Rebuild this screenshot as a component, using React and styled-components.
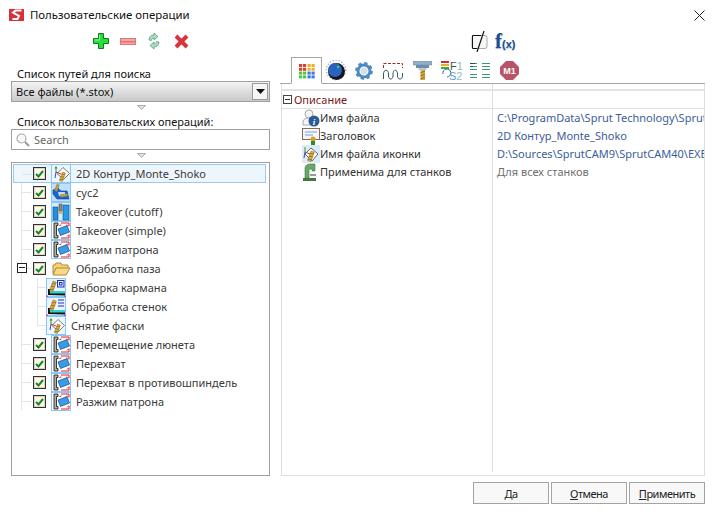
import React from "react";
import styled, { createGlobalStyle } from "styled-components";

const Global = createGlobalStyle`
  html, body { margin: 0; padding: 0; background: #fff; }
  body { font-family: "Noto Sans", "DejaVu Sans", sans-serif; font-size: 11px; color: #222; }
`;

const Dialog = styled.div`
  width: 716px; height: 516px; display: flex; flex-direction: column; background: #fff; overflow: hidden;
`;
const TitleBar = styled.div`
  height: 32px; display: flex; align-items: center; padding: 0 11px 2px 9px; box-sizing: border-box;
`;
const Title = styled.div`
  margin-left: 6px; flex: 1; font-size: 11.4px; color: #111; line-height: 14px;
`;
const Body = styled.div`
  height: 444px; display: flex; padding-left: 11px; gap: 11px;
`;
const LeftColumn = styled.div`
  width: 259px; display: flex; flex-direction: column;
`;
const ActionBar = styled.div`
  height: 36px; padding: 0 0 18px 82px; box-sizing: border-box; display: flex; align-items: center; gap: 11px;
`;
const FieldLabel = styled.div`
  height: 13px; line-height: 12px; padding-left: 6px; color: #111; font-size: 11px;
`;
const Combo = styled.div`
  height: 21px; box-sizing: border-box; border: 1px solid #a0a0a0; display: flex; align-items: center;
  padding: 0 1px 0 4px; background: linear-gradient(#f4f4f4, #c9c9c9); color: #111;
`;
const ComboText = styled.div`flex: 1;`;
const ComboButton = styled.div`
  width: 14px; height: 15px; border: 1px solid #9a9a9a; background: #f6f6f6; display: flex; align-items: center; justify-content: center;
`;
const Splitter = styled.div`
  height: 14px; display: flex; justify-content: center; padding-top: 3px; box-sizing: border-box; padding-left: 1px;
`;
const SearchBox = styled.div`
  height: 21px; box-sizing: border-box; border: 1px solid #a0a0a0; display: flex; align-items: center; padding-left: 4px; gap: 4px; color: #666;
`;
const SmallSplitter = styled(Splitter)`height: 12px;`;
const Tree = styled.div`
  position: relative; height: 314px; box-sizing: border-box; border: 1px solid #a0a0a0; padding: 1px 3px 0 1px;
  &::before { content: ""; position: absolute; left: 9px; top: 9px; height: 238px; border-left: 1px solid #e4e4e4; }
`;
const Row = styled.div`
  position: relative; height: 19px; display: flex; align-items: center; box-sizing: border-box;
  padding-left: ${p => p.$child ? 33 : 20}px; color: #3a3a3a;
  ${p => p.$selected && "background: #eef6fd; border: 1px solid #9ccbf2; padding-left: 19px;"}
  &::before {
    content: ""; position: absolute; left: ${p => p.$child ? 24 : 8}px; top: 9px; width: ${p => p.$child ? 9 : 10}px;
    border-top: 1px solid #e4e4e4; z-index: 0;
  }
`;
const ChildGroup = styled.div`
  position: relative;
  &::before { content: ""; position: absolute; left: 24px; top: 0; height: 48px; border-left: 1px solid #e4e4e4; }
`;
const Expander = styled.div`
  position: absolute; left: 4px; top: 4px; width: 8px; height: 8px; border: 1px solid #222; background: #fff; z-index: 1;
  &::after { content: ""; position: absolute; left: 1px; right: 1px; top: 3px; border-top: 1px solid #222; }
`;
const CheckBox = styled.div`
  width: 11px; height: 11px; border: 1px solid #20344c; background: #fdf8f0; display: flex; align-items: center; justify-content: center; position: relative; z-index: 1;
  box-shadow: inset 0 0 0 1px #f4cfa0;
`;
const IconSlot = styled.div`
  width: 20px; height: 19px; margin-left: ${p => p.$child ? 0 : 5}px; flex: none; display: flex; position: relative; z-index: 1;
`;
const RowLabel = styled.span`
  margin-left: 5px; white-space: nowrap;
`;
const RightColumn = styled.div`
  width: 424px; display: flex; flex-direction: column;
`;
const TopTools = styled.div`
  height: 25px; display: flex; align-items: flex-start; padding-left: 190px; gap: 7px; box-sizing: border-box;
`;
const Formula = styled.div`
  font-family: "Liberation Serif", serif; font-weight: bold; color: #1f4f93; line-height: 20px; margin-top: -1px; font-size: 21px;
  text-shadow: 0 1px 1px #9fb6d4;
  & span { font-size: 11px; font-family: "Liberation Sans", sans-serif; }
`;
const TabBar = styled.div`
  height: 27px; border-bottom: 1px solid #a6a6a6; display: flex; align-items: flex-end; box-sizing: border-box; padding-left: 11px; margin-left: -1px;
`;
const ActiveTab = styled.div`
  width: 31px; height: 27px; box-sizing: border-box; border: 1px solid #a6a6a6; border-bottom: 1px solid #fff; margin-bottom: -1px;
  display: flex; align-items: center; justify-content: center; background: #fff; padding-top: 1px;
`;
const TabIcon = styled.div`
  height: 25px; display: flex; align-items: center; justify-content: center; width: ${p => p.$w}px; flex: none;
`;
const Grid = styled.div`
  flex: 1; display: flex; border: 1px solid #dedede; border-top: none; min-height: 0;
`;
const NameColumn = styled.div`
  width: 210px; flex: none; display: flex; flex-direction: column;
`;
const ValueColumn = styled.div`
  flex: 1; min-width: 0; display: flex; flex-direction: column; overflow: hidden; margin-bottom: 3px; border-left: 1px solid #dedede;
`;
const Blank = styled.div`height: 7px; box-sizing: border-box; border-bottom: 2px solid #e3e3e3; flex: none;`;
const HeaderCell = styled.div`
  height: 18px; box-sizing: border-box; border-bottom: 1px solid #dedede; display: flex; align-items: center; color: #7a1818; padding-left: 1px; flex: none;
`;
const Minus = styled.div`
  width: 7px; height: 7px; border: 1px solid #444; position: relative; margin-right: 2px;
  &::after { content: ""; position: absolute; left: 1px; right: 1px; top: 3px; border-top: 1px solid #333; }
`;
const PropertyName = styled.div`
  height: 18px; box-sizing: border-box; display: flex; align-items: center; padding: 0 0 1px 20px; color: #333; flex: none; white-space: nowrap;
`;
const PropertyValue = styled.div`
  height: 18px; line-height: 18px; padding-left: 4px; white-space: nowrap; flex: none;
  color: ${p => p.$muted ? "#6f6f6f" : "#3d5d98"};
`;
const Footer = styled.div`
  height: 40px; display: flex; justify-content: flex-end; padding: 6px 11px 0 0; gap: 2px; box-sizing: border-box;
`;
const Button = styled.div`
  width: 76px; height: 22px; box-sizing: border-box; border: 1px solid #a3a3a3; background: #f8f8f8; display: flex; align-items: center; justify-content: center; color: #222; letter-spacing: -0.5px;
  & u { text-underline-offset: 1px; }
`;

const Logo = () => (
  <svg width="15" height="12" viewBox="0 0 15 12"><path d="M0 0h15v12H0z" fill="#d8303a"/><path d="M12.500 1.500H6.500L4 3.500l6 3.500-1.500 3H3.500" fill="none" stroke="#fff" strokeWidth="2"/></svg>
);
const CloseX = () => (
  <svg width="11" height="11" viewBox="0 0 11 11"><path d="M.5.5l10 10M10.500.5l-10 10" stroke="#222" strokeWidth="1"/></svg>
);
const Plus = () => (
  <svg width="16" height="16" viewBox="0 0 16 16"><path d="M5.500.5h5v5h5v5h-5v5h-5v-5h-5v-5h5z" fill="#25e03a" stroke="#0f7a1c"/><path d="M6.500 2v5h-5" fill="none" stroke="#9ff5a8"/></svg>
);
const MinusTool = () => (
  <svg width="16" height="7" viewBox="0 0 16 7"><rect x=".5" y=".5" width="15" height="6" fill="#f7a6a6" stroke="#d77a7a"/><rect x="1" y="3" width="14" height="1.500" fill="#e57373"/></svg>
);
const Refresh = () => (
  <svg width="14" height="18" viewBox="0 0 14 18"><path d="M2 8c0-3 2-5 5-5V1l4 3.500L7 8V6C5.500 6 4.500 7 4.500 8.500z" fill="#a9dcc0" stroke="#5f9f80" strokeWidth=".8"/><path d="M12 10c0 3-2 5-5 5v2l-4-3.500L7 10v2c1.500 0 2.500-1 2.500-2.500z" fill="#a9dcc0" stroke="#5f9f80" strokeWidth=".8"/></svg>
);
const CrossIcon = styled.svg`margin-left: 2px;`;
const Cross = () => (
  <CrossIcon width="15" height="15" viewBox="0 0 15 15"><path d="M2 2l11 11M13 2L2 13" stroke="#d8343c" strokeWidth="4"/></CrossIcon>
);
const Caret = () => (
  <svg width="9" height="5" viewBox="0 0 9 5"><path d="M0 0h9L4.500 5z" fill="#111"/></svg>
);
const SplitArrow = () => (
  <svg width="9" height="5" viewBox="0 0 9 5"><path d="M.5.500h8L4.500 4.500z" fill="#e2e2e2" stroke="#9a9a9a" strokeWidth=".8"/></svg>
);
const Magnifier = () => (
  <svg width="14" height="14" viewBox="0 0 14 14"><circle cx="5.500" cy="5.500" r="4.500" fill="#f7f7f7" stroke="#aaa" strokeWidth="1.200"/><path d="M9 9l4 4" stroke="#999" strokeWidth="2"/></svg>
);
const Check = () => (
  <svg width="9" height="8" viewBox="0 0 9 8"><path d="M1 4l2.500 2.500L8 1" fill="none" stroke="#0d8a25" strokeWidth="2"/></svg>
);

const Frame = ({ fill = "#e8f3fc", children }) => (
  <svg width="20" height="19" viewBox="0 0 20 19">
    <rect x=".5" y=".5" width="19" height="18" fill={fill} stroke="#8cc6f4"/>
    {children}
  </svg>
);
const Drill = ({ x = 11, y = 6, s = 1 }) => (
  <g transform={`translate(${x} ${y}) rotate(20) scale(${s})`}>
    <rect x="0" y="0" width="3.500" height="10" fill="#dcb040" stroke="#8a6a20" strokeWidth=".5"/>
    <path d="M0 3l3.500-1.500M0 6l3.500-1.500M0 9l3.500-1.500" stroke="#7a5a18" strokeWidth=".6"/>
  </g>
);
const Contour = () => (
  <Frame fill="#eef6fd">
    <path d="M6 9.500l6-6 6.500 6-6 6z" fill="#fff" stroke="#777"/>
    <path d="M5 8V3" stroke="#2aa02a"/><path d="M3.500 4.500L5 2l1.500 2.500z" fill="#2aa02a"/>
    <path d="M5 8l5 2" stroke="#d82a2a"/><path d="M5 8l-1 6" stroke="#2a4ad8"/>
    <Drill x={11.500} y={8} s={.9}/>
  </Frame>
);
const Cyc = () => (
  <Frame fill="#bfe0fa">
    <path d="M2 7l5-2 3 3h6l2 8H6L2 11z" fill="#1566d6" stroke="#0c3a88" strokeWidth=".6"/>
    <path d="M7 9h7v4H8z" fill="#bfe0fa"/>
    <Drill x={6} y={1} s={.7}/><g transform="rotate(60 14 13)"><Drill x={13} y={10} s={.7}/></g>
  </Frame>
);
const Cutoff = () => (
  <Frame fill="#d8ebfb">
    <rect x="2" y="5" width="5" height="13" fill="#1f8fe0" stroke="#0d4e90" strokeWidth=".6"/>
    <rect x="12" y="3" width="6" height="15" fill="#2a9ae8" stroke="#0d4e90" strokeWidth=".6"/>
    <rect x="8" y="2" width="3" height="7" fill="#8a8a8a" stroke="#444" strokeWidth=".5"/>
    <rect x="8" y="9" width="3" height="3" fill="#e2b23a"/>
  </Frame>
);
const Take = () => (
  <Frame fill="#fff">
    <path d="M3 2h4v2.500H5.500v10H7V17H3z" fill="#b0b0b0" stroke="#111" strokeWidth=".8"/>
    <path d="M7 8l9-3.500 2.500 6.500-9 3.500z" fill="#3a9ae4" stroke="#0d4e90" strokeWidth=".7"/>
    <path d="M8.500 4.500l2-.5M10 2h8v3M16 3.500L18 5.500" fill="none" stroke="#e02020"/>
    <path d="M10 17h8v-3M16 15.500L18 13.500" fill="none" stroke="#e02020"/>
  </Frame>
);
const Folder = () => (
  <svg width="20" height="19" viewBox="0 0 20 19">
    <path d="M2 15V6h2l1-2h5l1 2h6v3" fill="#f4d27a" stroke="#b08a38"/>
    <path d="M2 16l3-7h14l-4 7z" fill="#f8d884" stroke="#b08a38"/>
  </svg>
);
const Pocket = ({ walls }) => (
  <Frame fill="#e8f3fc">
    <path d="M2 17v-6h2v4h15v2.500z" fill="#111"/>
    <rect x="4" y="13" width="15" height="2.500" fill="#27d6c8"/>
    <Drill x={7} y={3}/>
    {walls
      ? <path d="M12 3h6M12 6h6M12 9h6" stroke="#2030c0" strokeWidth="1.200"/>
      : <><rect x="11.500" y="2.500" width="6.500" height="6.500" fill="none" stroke="#2030c0"/><rect x="13.500" y="4.500" width="2.500" height="2.500" fill="none" stroke="#2030c0"/></>}
    <rect x="0" y="17.500" width="2" height="1.500" fill="#e040e0"/><rect x="18" y="17.500" width="2" height="1.500" fill="#e040e0"/>
  </Frame>
);

const GridIcon = () => {
  const colors = ["#d8412f", "#d8412f", "#eab22c", "#eab22c", "#d8412f", "#d8412f", "#eab22c", "#eab22c", "#4fc83c", "#4fc83c", "#3a7ae8", "#3a7ae8", "#4fc83c", "#4fc83c", "#3a7ae8", "#3a7ae8"];
  return (
    <svg width="16" height="15" viewBox="0 0 16 15">
      {colors.map((c, i) => <rect key={i} x={(i % 4) * 4 + (i % 4 > 1 ? 0.5 : 0)} y={Math.floor(i / 4) * 3.800} width="3.200" height="3" fill={c}/>)}
    </svg>
  );
};
const Knob = () => (
  <svg width="22" height="21" viewBox="0 0 22 21">
    <circle cx="11" cy="10" r="9.700" fill="none" stroke="#999" strokeWidth="1.400" strokeDasharray="1 2"/>
    <circle cx="11.500" cy="11.500" r="8.500" fill="#15151f"/>
    <circle cx="10" cy="10" r="7" fill="#2a62c0"/>
    <circle cx="13" cy="7" r="1.200" fill="#30e050"/>
  </svg>
);
const Gear = () => (
  <svg width="18" height="18" viewBox="0 0 18 18">
    <circle cx="9" cy="9" r="6" fill="none" stroke="#4d8ac0" strokeWidth="3"/>
    <circle cx="9" cy="9" r="7.700" fill="none" stroke="#4d8ac0" strokeWidth="2.400" strokeDasharray="3.200 2.850"/>
    <circle cx="9" cy="9" r="3.500" fill="#cfe2f2"/>
  </svg>
);
const Wave = () => (
  <svg width="20" height="18" viewBox="0 0 20 18">
    <path d="M.5 6V1.500h19V6" fill="none" stroke="#a02a2a" strokeDasharray="3 1.500"/>
    <path d="M.5 17v-5c0-5 5-5 5 0v2c0 4 4.500 4 4.500 0v-2c0-5 4.500-5 4.500 0v2c0 4 5 4 5 0v-3" fill="none" stroke="#2f5f50" strokeWidth="1"/>
  </svg>
);
const Tool = () => (
  <svg width="19" height="19" viewBox="0 0 19 19">
    <rect x="0" y="0" width="19" height="4" fill="#8fb0c8" stroke="#6a8aa0" strokeWidth=".5"/>
    <rect x="3" y="4" width="13" height="3" fill="#6d8ea8"/>
    <rect x="5.500" y="7" width="8" height="2" fill="#b8cad8"/>
    <rect x="7.500" y="9" width="4.500" height="10" fill="#d8a838"/>
    <path d="M7.500 12l4.500-2M7.500 15l4.500-2M7.500 18l4.500-2" stroke="#7a5a18" strokeWidth=".8"/>
  </svg>
);
const SpindleCode = () => (
  <svg width="22" height="19" viewBox="0 0 22 19">
    <rect x="0" y="0" width="8" height="2" fill="#c83030"/><rect x="0" y="3" width="8" height="2" fill="#e8b020"/><rect x="0" y="6" width="8" height="2" fill="#40b040"/>
    <text x="9" y="8.500" fontFamily="Liberation Sans" fontSize="11" fill="#2f5f50">F<tspan fill="#8fc0a8">1</tspan></text>
    <path d="M6 16a4 4 0 1 0-4-3" fill="none" stroke="#2a6a9a"/>
    <text x="8" y="18.500" fontFamily="Liberation Sans" fontSize="11" fill="#5a9ac0">S<tspan fill="#8fbcd8">2</tspan></text>
  </svg>
);
const Lines = () => (
  <svg width="20" height="18" viewBox="0 0 20 18">
    <path d="M0 1.500h7M0 4.500h7M0 7.500h7M0 12.500h7M0 15.500h7M12 1.500h8M12 4.500h8M12 7.500h8M12 12.500h8M12 15.500h8" stroke="#3a9a78"/>
    <path d="M0 1.500h5M0 4.500h3" stroke="#1f4f60"/>
  </svg>
);
const M1 = () => (
  <svg width="19" height="19" viewBox="0 0 19 19">
    <path d="M6 0h7l6 6v7l-6 6H6l-6-6V6z" fill="#b85468"/>
    <text x="9.500" y="13" textAnchor="middle" fontFamily="Liberation Sans" fontWeight="bold" fontSize="9" fill="#fff">M1</text>
  </svg>
);
const SlashIcon = styled.svg`margin-top: -1px;`;
const SlashBox = () => (
  <SlashIcon width="17" height="21" viewBox="0 0 17 21">
    <rect x="1" y="4.500" width="15" height="13" rx="2" fill="#f6f6f6" stroke="#a8a8a8"/>
    <path d="M10 4.500H1.500v13H6" fill="none" stroke="#111"/>
    <path d="M13 0L6 21" stroke="#111" strokeWidth="1.200"/>
  </SlashIcon>
);
const InfoIcon = () => (
  <svg width="18" height="18" viewBox="0 0 18 18">
    <circle cx="7" cy="5" r="4" fill="#f4f4f4" stroke="#aaa"/>
    <path d="M1 16v-3c0-3 3-4 6-4h3v7z" fill="#f4f4f4" stroke="#aaa"/>
    <circle cx="12" cy="12" r="5.500" fill="#2a5a98"/>
    <text x="12" y="15.500" textAnchor="middle" fontFamily="Liberation Serif" fontWeight="bold" fontStyle="italic" fontSize="9" fill="#fff">i</text>
  </svg>
);
const Caption = () => (
  <svg width="18" height="18" viewBox="0 0 18 18">
    <rect x=".5" y="1.500" width="17" height="11" fill="#f4f8fc" stroke="#8a6a50"/>
    <path d="M3 5h12M3 8h8" stroke="#7aa0c8"/>
    <circle cx="11" cy="12" r="2.500" fill="#d8a020"/>
    <rect x="9" y="14" width="4" height="4" fill="#2a8a3a"/>
  </svg>
);
const SmallContour = () => (
  <svg width="18" height="18" viewBox="0 0 18 18">
    <rect width="18" height="18" fill="#dcebf8"/>
    <path d="M3 9l6-6 7 6-6 7z" fill="#fff" stroke="#666"/>
    <path d="M3 7V2" stroke="#2aa02a"/><path d="M3 7l5 2" stroke="#d82a2a"/><path d="M3 7l-1 6" stroke="#2a4ad8"/>
    <Drill x={9} y={6}/>
  </svg>
);
const Machine = () => (
  <svg width="18" height="18" viewBox="0 0 18 18">
    <path d="M3 15V5c0-2 2-4 5-4h5v7h-3V6H8c-1 0-1 1-1 2v7z" fill="#6aa86a" stroke="#3f7a3f" strokeWidth=".6"/>
    <rect x="1" y="15" width="13" height="3" fill="#3f7a3f"/>
    <rect x="8" y="11" width="6" height="2" fill="#999"/>
  </svg>
);

const icons = { contour: <Contour/>, cyc: <Cyc/>, cutoff: <Cutoff/>, take: <Take/>, folder: <Folder/>, pocket: <Pocket/>, walls: <Pocket walls/> };

const TreeRow = ({ icon, label, selected }) => (
  <Row $selected={selected}>
    <CheckBox><Check/></CheckBox>
    <IconSlot>{icons[icon]}</IconSlot>
    <RowLabel>{label}</RowLabel>
  </Row>
);
const ChildRow = ({ icon, label }) => (
  <Row $child>
    <IconSlot $child>{icons[icon]}</IconSlot>
    <RowLabel>{label}</RowLabel>
  </Row>
);

export default function App() {
  return (
    <Dialog>
      <Global/>
      <TitleBar>
        <Logo/>
        <Title>Пользовательские операции</Title>
        <CloseX/>
      </TitleBar>
      <Body>
        <LeftColumn>
          <ActionBar><Plus/><MinusTool/><Refresh/><Cross/></ActionBar>
          <FieldLabel>Список путей для поиска</FieldLabel>
          <Combo><ComboText>Все файлы (*.stox)</ComboText><ComboButton><Caret/></ComboButton></Combo>
          <Splitter><SplitArrow/></Splitter>
          <FieldLabel>Список пользовательских операций:</FieldLabel>
          <SearchBox><Magnifier/>Search</SearchBox>
          <SmallSplitter><SplitArrow/></SmallSplitter>
          <Tree>
            <TreeRow selected icon="contour" label="2D Контур_Monte_Shoko"/>
            <Spacer/>
            <TreeRow icon="cyc" label="cyc2"/>
            <TreeRow icon="cutoff" label="Takeover (cutoff)"/>
            <TreeRow icon="take" label="Takeover (simple)"/>
            <TreeRow icon="take" label="Зажим патрона"/>
            <Row>
              <Expander/>
              <CheckBox><Check/></CheckBox>
              <IconSlot>{icons.folder}</IconSlot>
              <RowLabel>Обработка паза</RowLabel>
            </Row>
            <ChildGroup>
              <ChildRow icon="pocket" label="Выборка кармана"/>
              <ChildRow icon="walls" label="Обработка стенок"/>
              <ChildRow icon="contour" label="Снятие фаски"/>
            </ChildGroup>
            <TreeRow icon="take" label="Перемещение люнета"/>
            <TreeRow icon="take" label="Перехват"/>
            <TreeRow icon="take" label="Перехват в противошпиндель"/>
            <TreeRow icon="take" label="Разжим патрона"/>
          </Tree>
        </LeftColumn>
        <RightColumn>
          <TopTools><SlashBox/><Formula>f<span>(x)</span></Formula></TopTools>
          <TabBar>
            <ActiveTab><GridIcon/></ActiveTab>
            <TabIcon $w={28}><Knob/></TabIcon>
            <TabIcon $w={28}><Gear/></TabIcon>
            <TabIcon $w={30}><Wave/></TabIcon>
            <TabIcon $w={29}><Tool/></TabIcon>
            <TabIcon $w={29}><SpindleCode/></TabIcon>
            <TabIcon $w={27}><Lines/></TabIcon>
            <TabIcon $w={32}><M1/></TabIcon>
          </TabBar>
          <Grid>
            <NameColumn>
              <Blank/>
              <HeaderCell><Minus/>Описание</HeaderCell>
              <PropertyName><InfoIcon/>Имя файла</PropertyName>
              <PropertyName><Caption/>Заголовок</PropertyName>
              <PropertyName><SmallContour/>Имя файла иконки</PropertyName>
              <PropertyName><Machine/>Применима для станков</PropertyName>
            </NameColumn>
            <ValueColumn>
              <Blank/>
              <HeaderCell/>
              <PropertyValue>C:\ProgramData\Sprut Technology\SprutCAM</PropertyValue>
              <PropertyValue>2D Контур_Monte_Shoko</PropertyValue>
              <PropertyValue>D:\Sources\SprutCAM9\SprutCAM40\EXE\Operations</PropertyValue>
              <PropertyValue $muted>Для всех станков</PropertyValue>
            </ValueColumn>
          </Grid>
        </RightColumn>
      </Body>
      <Footer>
        <Button>Да</Button>
        <Button><span><u>О</u>тмена</span></Button>
        <Button><span><u>П</u>рименить</span></Button>
      </Footer>
    </Dialog>
  );
}

function Spacer() { return null; }
